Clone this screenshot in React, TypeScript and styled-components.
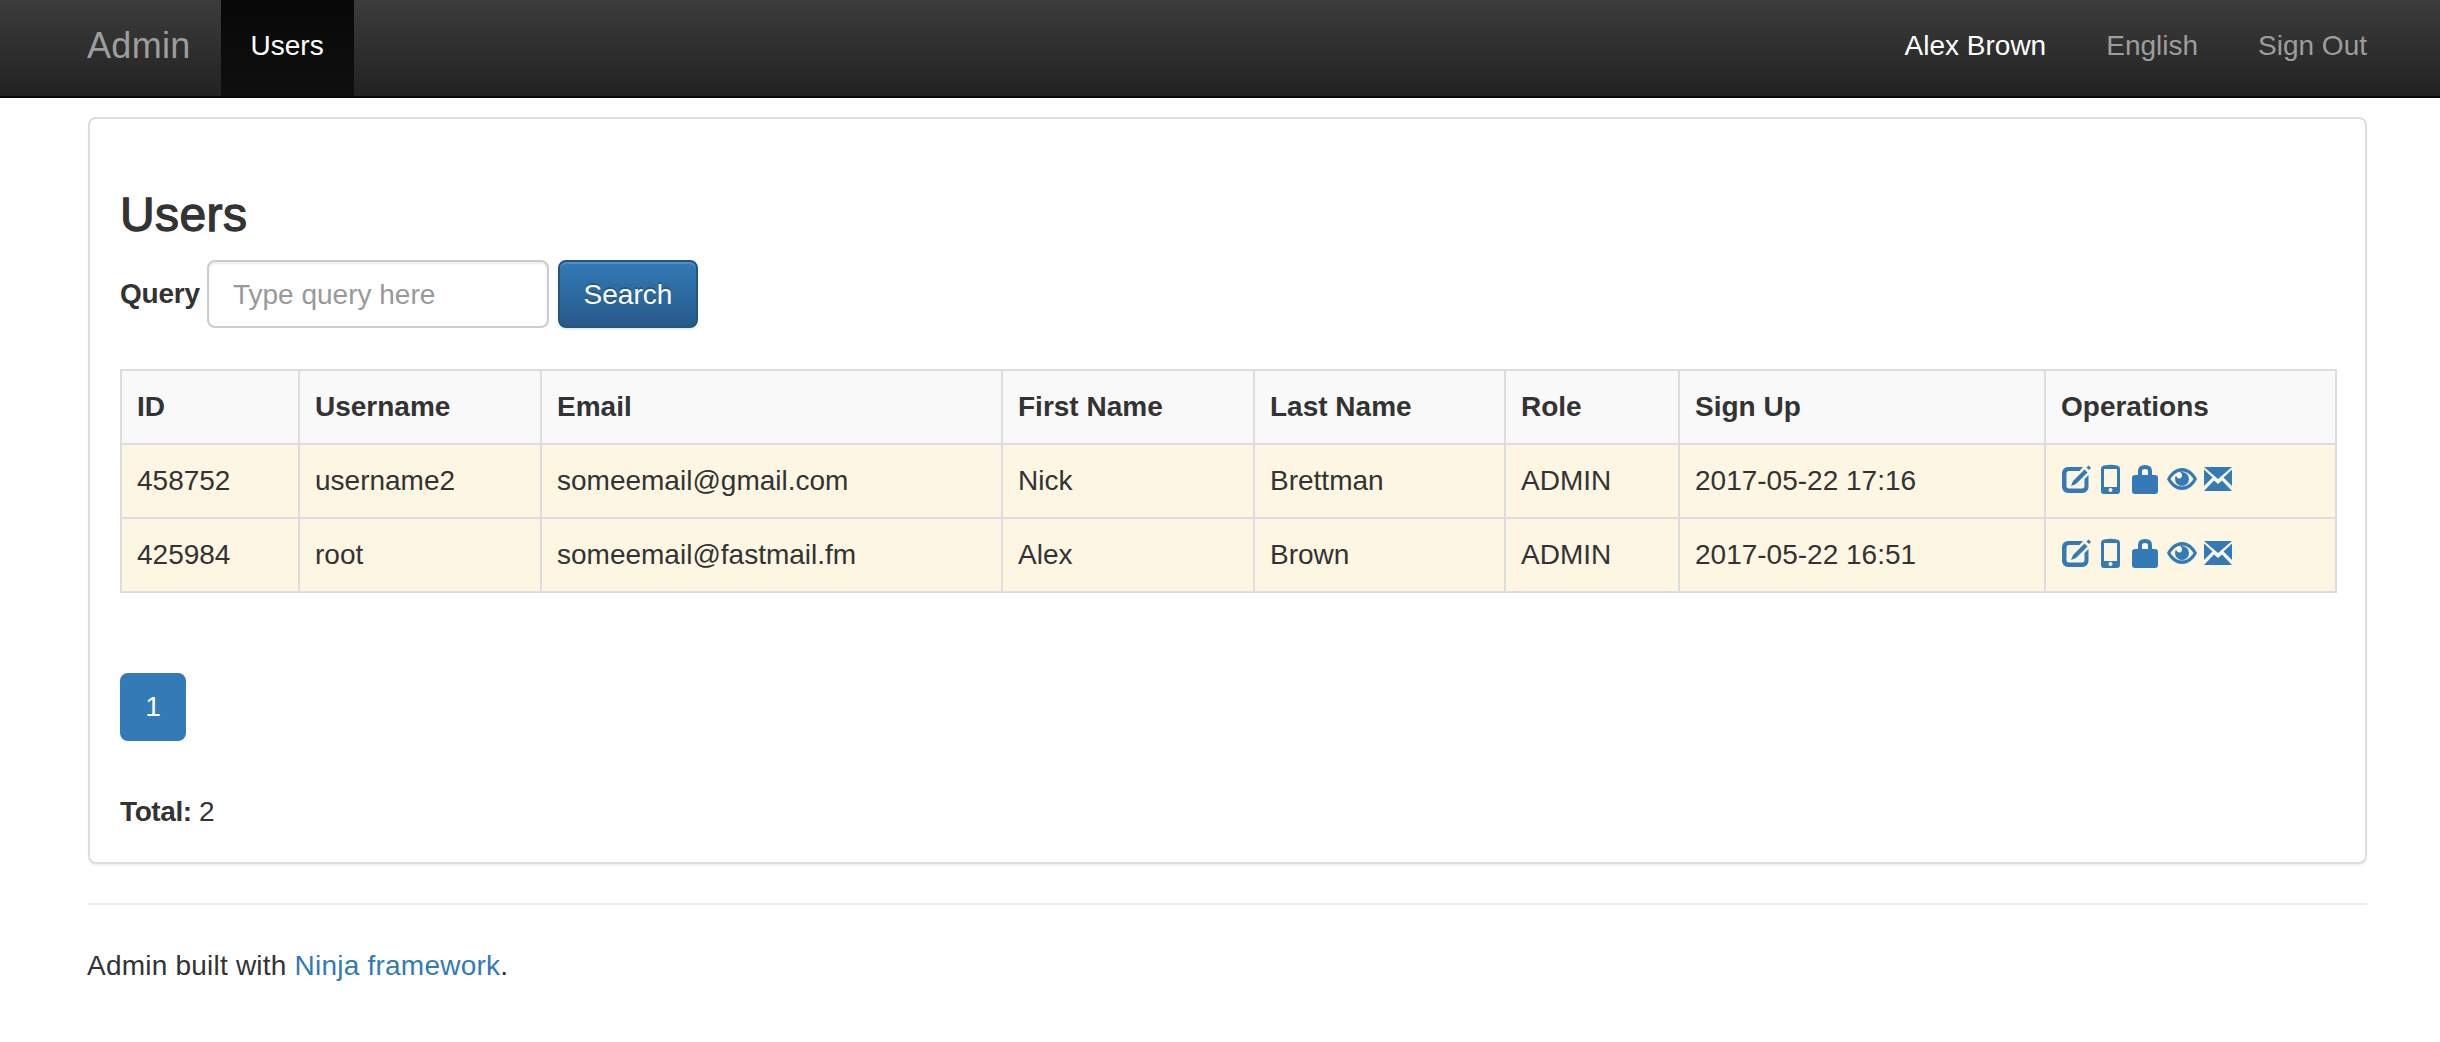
import styled, { createGlobalStyle } from 'styled-components';

const GlobalStyle = createGlobalStyle`
  html, body {
    margin: 0;
    padding: 0;
    background: #fff;
    color: #333;
    font-family: "Liberation Sans", Arial, sans-serif;
    font-size: 28px;
    line-height: 40px;
  }
  * {
    box-sizing: border-box;
  }
`;

const Navbar = styled.nav`
  display: flex;
  height: 98px;
  padding: 0 73px 0 87px;
  background: linear-gradient(#3c3c3c, #222);
  border-bottom: 2px solid #080808;
`;

const Brand = styled.a`
  padding-right: 30px;
  font-size: 36px;
  line-height: 92px;
  letter-spacing: 0.3px;
  color: #9d9d9d;
`;

const NavItem = styled.a<{ $active?: boolean; $light?: boolean }>`
  padding: 0 30px;
  line-height: 92px;
  color: ${(p) => (p.$active || p.$light ? '#fff' : '#9d9d9d')};
  background: ${(p) => (p.$active ? 'linear-gradient(#080808, #0f0f0f)' : 'none')};
`;

const NavRight = styled.div`
  display: flex;
  margin-left: auto;
  margin-right: -30px;
`;

const Page = styled.main`
  width: 2279px;
  margin: 19px 0 0 88px;
`;

const Card = styled.section`
  padding: 69px 30px 30px;
  background: #fff;
  border: 2px solid #ddd;
  border-radius: 8px;
  box-shadow: 0 2px 2px rgba(0, 0, 0, 0.05);
`;

const Title = styled.h3`
  margin: 0 0 19px;
  font-size: 48px;
  line-height: 53px;
  font-weight: 400;
  letter-spacing: 0.4px;
  -webkit-text-stroke: 1.3px #333;
`;

const SearchForm = styled.form`
  display: flex;
  align-items: center;
  height: 68px;
  margin-bottom: 41px;
`;

const FieldLabel = styled.label`
  margin-right: 7px;
  font-weight: 700;
  letter-spacing: -0.2px;
`;

const QueryInput = styled.input`
  width: 342px;
  height: 68px;
  padding: 2px 24px 0;
  border: 2px solid #ccc;
  border-radius: 8px;
  font: inherit;
  color: #555;
  box-shadow: inset 0 2px 2px rgba(0, 0, 0, 0.075);

  &::placeholder {
    color: #999;
    opacity: 1;
  }
`;

const SearchButton = styled.button`
  width: 140px;
  height: 68px;
  margin-left: 9px;
  padding: 2px 0 0;
  border: 2px solid #245580;
  border-radius: 8px;
  background: linear-gradient(#337ab7, #265a88);
  box-shadow: inset 0 2px 0 rgba(255, 255, 255, 0.15), 0 2px 2px rgba(0, 0, 0, 0.075);
  color: #fff;
  font: inherit;
  text-shadow: 0 -2px 0 rgba(0, 0, 0, 0.2);
`;

const Table = styled.table`
  width: 2215px;
  table-layout: fixed;
  border-collapse: collapse;
  border: 2px solid #ddd;
`;

const Column = styled.col<{ $width: number }>`
  width: ${(p) => p.$width}px;
`;

const HeadCell = styled.th`
  height: 74px;
  padding: 0 16px 0 15px;
  border: 2px solid #ddd;
  background: #f9f9f9;
  text-align: left;
  font-weight: 700;
`;

const BodyCell = styled.td`
  height: 74px;
  padding: 0 16px 0 15px;
  border: 2px solid #ddd;
  background: #fcf6e3;
`;

const IconRow = styled.div`
  display: flex;
  align-items: center;
  height: 30px;
  margin-top: -5px;
`;

const IconLink = styled.a<{ $gap: number; $width: number }>`
  display: block;
  flex: none;
  width: ${(p) => p.$width}px;
  height: 30px;
  margin-left: ${(p) => p.$gap}px;
  color: #337ab7;

  svg {
    display: block;
    width: 100%;
    height: 100%;
    fill: currentColor;
  }
`;

const Pager = styled.a`
  display: block;
  width: 66px;
  height: 68px;
  margin-top: 80px;
  border: 2px solid #337ab7;
  border-radius: 8px;
  background: #337ab7;
  color: #fff;
  line-height: 64px;
  text-align: center;
`;

const Total = styled.p`
  margin: 51px 0 0;
  letter-spacing: -0.4px;
`;

const Divider = styled.hr`
  height: 2px;
  margin: 39px 0 0;
  border: 0;
  background: #eee;
`;

const Footer = styled.footer`
  margin-top: 41px;
  margin-left: -1px;
  letter-spacing: 0.22px;
`;

const FooterLink = styled.a`
  color: #337ab7;
`;

const EditIcon = () => (
  <svg viewBox="0 0 30 30">
    <path d="M8 3h14l-3.500 4H8a2.500 2.500 0 0 0-2.500 2.500V22A2.500 2.500 0 0 0 8 24.500h13a2.500 2.500 0 0 0 2.500-2.500v-7l4-4v12a6 6 0 0 1-6 6H7a6 6 0 0 1-6-6V9a6 6 0 0 1 6-6z" />
    <path d="M23.500 5.500l3 3L15 20l-5 2 2-5z" />
    <path d="M25.500 3.500l2-2 2.500 2.500-2 2z" />
  </svg>
);

const PhoneIcon = () => (
  <svg viewBox="0 0 19 30">
    <path
      fillRule="evenodd"
      d="M3 1.500Q9.500 0 16 1.500 19 2 19 5v22q0 3-3 3H3q-3 0-3-3V5q0-3 3-3.500zM3 5v18h13V5zM9.500 24a2 2 0 1 0 0 4 2 2 0 0 0 0-4z"
    />
  </svg>
);

const LockIcon = () => (
  <svg viewBox="0 0 26 30">
    <path
      fillRule="evenodd"
      d="M6 11V7q0-6 7-6t7 6v4h3q3 0 3 3v13q0 3-3 3H3q-3 0-3-3V14q0-3 3-3zm4 0h6V7q0-2-3-2t-3 2z"
    />
  </svg>
);

const EyeIcon = () => (
  <svg viewBox="0 0 30 30">
    <path
      fillRule="evenodd"
      d="M15 4c7 0 12 5 15 11-3 6-8 11-15 11S3 21 0 15C3 9 8 4 15 4zM15 7.500c-5 0-9 3.500-11.500 7.500C6 19 10 22.500 15 22.500S24 19 26.500 15C24 11 20 7.500 15 7.500zM15 8a7 7 0 1 1-7 7q0-2 1-3.500 1 3 3.500 3t2.500-3.500q0-2-2-3 1-.5 2-.5z"
    />
  </svg>
);

const EnvelopeIcon = () => (
  <svg viewBox="0 0 28 30">
    <path d="M0 3h28L14 15z" />
    <path d="M0 5.500l8.500 8L0 22z" />
    <path d="M28 5.500l-8.500 8L28 22z" />
    <path d="M0 27l10-10.500 4 3.500 4-3.500L28 27z" />
  </svg>
);

const columns = [178, 242, 461, 252, 251, 174, 366, 291];
const headings = ['ID', 'Username', 'Email', 'First Name', 'Last Name', 'Role', 'Sign Up', 'Operations'];

const users = [
  ['458752', 'username2', 'someemail@gmail.com', 'Nick', 'Brettman', 'ADMIN', '2017-05-22 17:16'],
  ['425984', 'root', 'someemail@fastmail.fm', 'Alex', 'Brown', 'ADMIN', '2017-05-22 16:51'],
];

export default function App() {
  return (
    <>
      <GlobalStyle />
      <Navbar>
        <Brand>Admin</Brand>
        <NavItem $active>Users</NavItem>
        <NavRight>
          <NavItem $light>Alex Brown</NavItem>
          <NavItem>English</NavItem>
          <NavItem>Sign Out</NavItem>
        </NavRight>
      </Navbar>

      <Page>
        <Card>
          <Title>Users</Title>
          <SearchForm>
            <FieldLabel>Query</FieldLabel>
            <QueryInput placeholder="Type query here" />
            <SearchButton type="button">Search</SearchButton>
          </SearchForm>

          <Table>
            <colgroup>
              {columns.map((width, i) => (
                <Column key={i} $width={width} />
              ))}
            </colgroup>
            <thead>
              <tr>
                {headings.map((h) => (
                  <HeadCell key={h}>{h}</HeadCell>
                ))}
              </tr>
            </thead>
            <tbody>
              {users.map((row) => (
                <tr key={row[0]}>
                  {row.map((value, i) => (
                    <BodyCell key={i}>{value}</BodyCell>
                  ))}
                  <BodyCell>
                    <IconRow>
                      <IconLink $gap={0} $width={30}><EditIcon /></IconLink>
                      <IconLink $gap={10} $width={19}><PhoneIcon /></IconLink>
                      <IconLink $gap={12} $width={26}><LockIcon /></IconLink>
                      <IconLink $gap={9} $width={30}><EyeIcon /></IconLink>
                      <IconLink $gap={7} $width={28}><EnvelopeIcon /></IconLink>
                    </IconRow>
                  </BodyCell>
                </tr>
              ))}
            </tbody>
          </Table>

          <Pager>1</Pager>
          <Total>
            <strong>Total:</strong> 2
          </Total>
        </Card>

        <Divider />
        <Footer>
          Admin built with <FooterLink>Ninja framework</FooterLink>.
        </Footer>
      </Page>
    </>
  );
}
